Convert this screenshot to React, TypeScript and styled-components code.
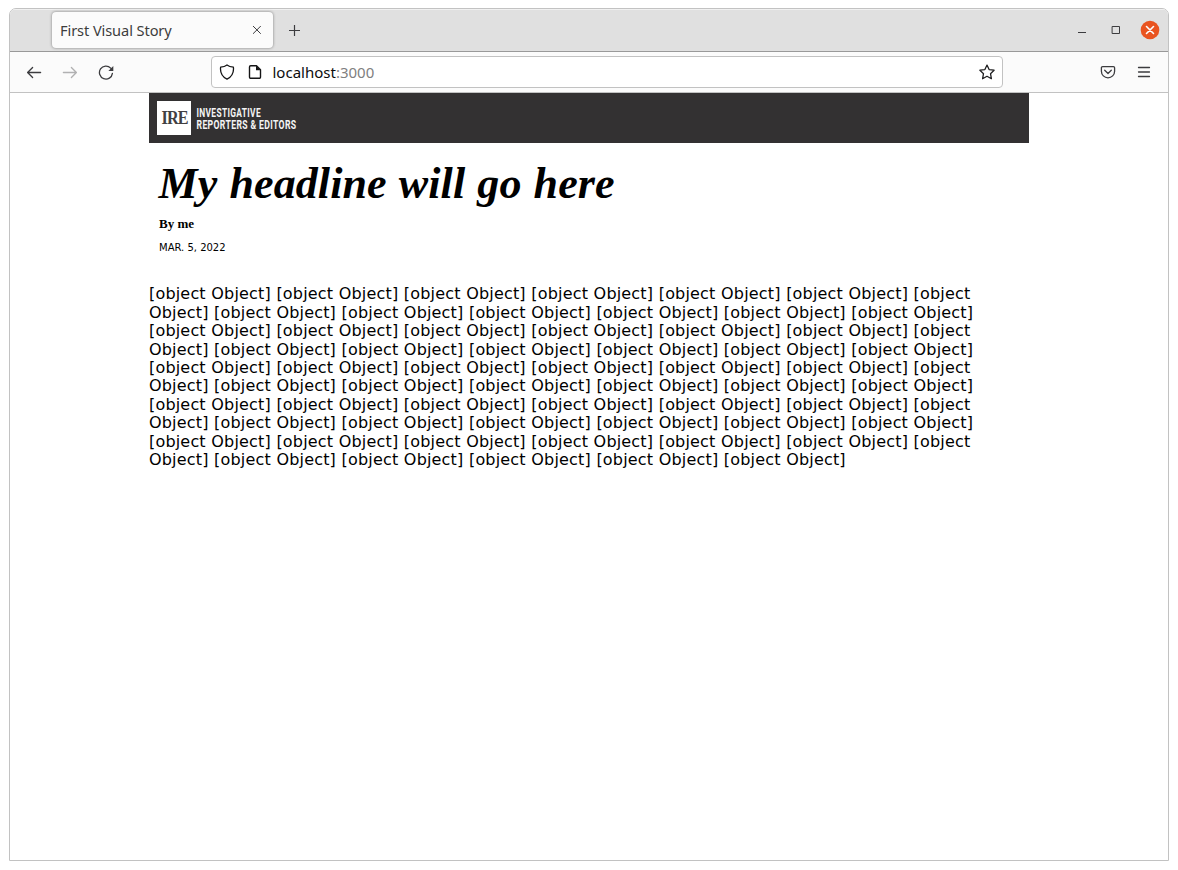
import React from "react";
import styled, { createGlobalStyle } from "styled-components";

const GlobalStyle = createGlobalStyle`
  body { margin: 0; background: #fff; }
  * { box-sizing: border-box; }
`;

const ui = `"Noto Sans", "Open Sans", sans-serif`;

const Desktop = styled.div`
  height: 870px;
  padding: 8px 9px 9px;
  overflow: hidden;
`;

const BrowserWindow = styled.div`
  display: flex;
  flex-direction: column;
  width: 1160px;
  height: 853px;
  border: 1px solid #c2c2c2;
  border-radius: 7px 7px 0 0;
  overflow: hidden;
  background: #fff;
`;

const TabStrip = styled.div`
  display: flex;
  align-items: center;
  flex: none;
  height: 43px;
  padding: 0 8px 2px 42px;
  background: #e0e0e0;
  border-top: 1px solid #f1f1f1;
  border-bottom: 1px solid #999;
`;

const Tab = styled.div`
  display: flex;
  align-items: center;
  justify-content: space-between;
  width: 221px;
  height: 36px;
  padding: 0 11px 0 8px;
  border-radius: 4px;
  background: #fbfbfb;
  box-shadow: 0 0 3px rgba(0, 0, 0, 0.45);
`;

const TabTitle = styled.span`
  font: 14.6px/20px ${ui};
  letter-spacing: -0.09px;
  color: #3d3d3d;
`;

const NewTab = styled.div`
  display: flex;
  margin-left: 16px;
`;

const WindowControls = styled.div`
  display: flex;
  align-items: center;
  gap: 15px;
  margin-left: auto;
`;

const Toolbar = styled.div`
  display: flex;
  align-items: center;
  flex: none;
  height: 41px;
  padding: 0 16px;
  background: #fbfbfb;
  border-bottom: 1px solid #c2c2c2;
`;

const ButtonGroup = styled.div<{ $gap: number }>`
  display: flex;
  gap: ${(p) => p.$gap}px;
`;

const AddressBar = styled.div`
  display: flex;
  align-items: center;
  width: 792px;
  height: 32px;
  margin-left: 97px;
  margin-right: auto;
  padding: 0 7px;
  border: 1px solid #c2c2c2;
  border-radius: 4px;
  background: #fff;
`;

const Address = styled.span`
  flex: 1;
  margin-left: 9.5px;
  font: 15px/20px ${ui};
  color: #0c0c0d;
`;

const Port = styled.span`
  color: #808080;
`;

const Page = styled.main`
  width: 880px;
  margin: 0 auto;
  font: 16px/18.4px "DejaVu Sans", sans-serif;
  color: #000;
`;

const SiteHeader = styled.header`
  display: flex;
  align-items: center;
  height: 50px;
  padding: 0 8px;
  background: #333132;
`;

const StoryHead = styled.div`
  padding: 16px 10px 0;
  height: 142.3px;
`;

const Headline = styled.h1`
  margin: 0 0 0 -0.5px;
  font: italic bold 44px/50px "Liberation Serif", serif;
  letter-spacing: 0.1px;
  word-spacing: 1px;
`;

const Byline = styled.p`
  margin: 7px 0 0;
  font: bold 13px/16px "Liberation Serif", serif;
`;

const PubDate = styled.time`
  display: block;
  margin-top: 10px;
  font-size: 10px;
  line-height: 12px;
  text-transform: uppercase;
`;

const Body = styled.p`
  margin: 0;
  letter-spacing: 0.18px;
  word-spacing: 0.24px;
`;

type IconProps = { size?: number; color?: string; width?: number; children: React.ReactNode };

const Icon = ({ size = 16, color = "#3c3c3f", width = 1.3, children }: IconProps) => (
  <svg
    width={size}
    height={size}
    viewBox={`0 0 ${size} ${size}`}
    fill="none"
    stroke={color}
    strokeWidth={width}
    strokeLinecap="round"
    strokeLinejoin="round"
  >
    {children}
  </svg>
);

const Logo = () => (
  <svg width="200" height="34" viewBox="0 0 200 34">
    <rect width="34" height="34" fill="#fff" />
    <text x="4.6" y="22.7" fontFamily="Liberation Serif, serif" fontWeight="bold" fontSize="19" fill="#414042" textLength="26.2" letterSpacing="-1" lengthAdjust="spacingAndGlyphs">IRE</text>
    <g fontFamily="Roboto, sans-serif" fontWeight="bold" fontSize="12.4" fill="#f4f4f4" letterSpacing="0.5">
      <text x="39.5" y="15.8" textLength="64.5" lengthAdjust="spacingAndGlyphs">INVESTIGATIVE</text>
      <text x="39.5" y="27.8" textLength="100" lengthAdjust="spacingAndGlyphs">REPORTERS &amp; EDITORS</text>
    </g>
  </svg>
);

const paragraphs = Array.from({ length: 64 }, () => ({}));

export default function App() {
  return (
    <Desktop>
      <GlobalStyle />
      <BrowserWindow>
        <TabStrip>
          <Tab>
            <TabTitle>First Visual Story</TabTitle>
            <Icon size={11} width={1}><path d="M2.3 2.3l7.2 7.2M9.500 2.3L2.300 9.5" /></Icon>
          </Tab>
          <NewTab>
            <Icon size={12} width={1.2}><path d="M5.5 1v11M0 6.5h11" strokeLinecap="butt" /></Icon>
          </NewTab>
          <WindowControls>
            <Icon size={18} width={1}><path d="M4 11.5h8" strokeLinecap="butt" /></Icon>
            <Icon size={18} width={1}><path d="M5.5 5.5h7v7h-7z" strokeLinejoin="miter" /></Icon>
            <Icon size={20} color="#fff" width={1.6}>
              <circle cx="10" cy="10" r="9.3" fill="#e95420" stroke="none" />
              <path d="M6.5 6.5l7 7M13.5 6.5l-7 7" />
            </Icon>
          </WindowControls>
        </TabStrip>
        <Toolbar>
          <ButtonGroup $gap={20}>
            <Icon><path d="M14.6 8.5H1.8M6.6 3.5L1.6 8.5l5 5" /></Icon>
            <Icon color="#b1b1b2"><path d="M1.4 8.5h12.8M9.4 3.5l5 5-5 5" /></Icon>
            <Icon>
              <path d="M14.4 9.3a6.500 6.500 0 1 1-1.700-5.200l1.200 1.300" />
              <path d="M15.3 2v4.900h-4.900z" fill="#3c3c3f" stroke="none" />
            </Icon>
          </ButtonGroup>
          <AddressBar>
            <ButtonGroup $gap={12}>
              <Icon color="#151516"><path d="M8 .9c1.8 1.4 3.9 2 6.4 2.3C15 8.6 12.8 12.8 8 15.2 3.2 12.8 1 8.6 1.6 3.2 4.1 2.9 6.2 2.3 8 .9z" /></Icon>
              <Icon color="#151516" width={1.4}>
                <path d="M9.5 1.7H3.7a1.2 1.2 0 0 0-1.2 1.2v10.2a1.2 1.2 0 0 0 1.2 1.2h8.6a1.2 1.2 0 0 0 1.2-1.2V5.7z" />
                <path d="M9 1.5v4.7h4.7z" fill="#151516" stroke="none" />
              </Icon>
            </ButtonGroup>
            <Address>localhost<Port>:3000</Port></Address>
            <Icon color="#202022"><path d="M8 1.1l2.1 4.500 5 .6-3.600 3.500.9 5L8 12.300l-4.400 2.400.9-5L.9 6.200l5-.6z" /></Icon>
          </AddressBar>
          <ButtonGroup $gap={20}>
            <Icon>
              <path d="M2.6 2.6h10.8a1.2 1.2 0 0 1 1.2 1.2v3.4a6.6 6.6 0 0 1-13.2 0V3.8a1.2 1.2 0 0 1 1.2-1.2z" />
              <path d="M4.7 6.3L8 9.5l3.3-3.2" />
            </Icon>
            <Icon><path d="M2.5 3.5h11M2.5 8h11M2.5 12.500h11" /></Icon>
          </ButtonGroup>
        </Toolbar>
        <Page>
          <SiteHeader><Logo /></SiteHeader>
          <StoryHead>
            <Headline>My headline will go here</Headline>
            <Byline>By me</Byline>
            <PubDate>Mar. 5, 2022</PubDate>
          </StoryHead>
          <Body>{paragraphs.map(String).join(" ")}</Body>
        </Page>
      </BrowserWindow>
    </Desktop>
  );
}
